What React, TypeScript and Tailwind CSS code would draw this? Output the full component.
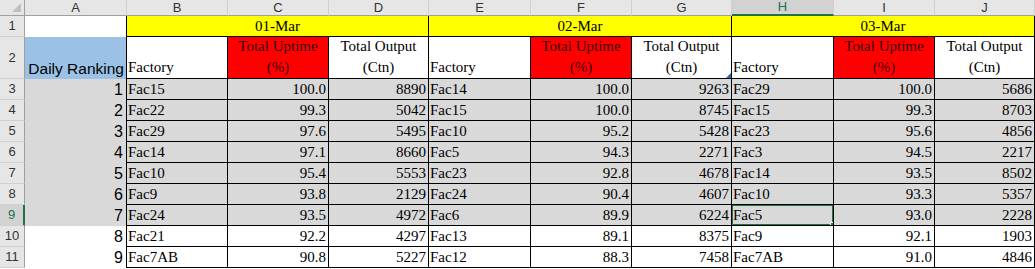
import * as React from "react";

type Row = { rank: number; days: [string, string, string][] };

const rows: Row[] = [
  { rank: 1, days: [["Fac15", "100.0", "8890"], ["Fac14", "100.0", "9263"], ["Fac29", "100.0", "5686"]] },
  { rank: 2, days: [["Fac22", "99.3", "5042"], ["Fac15", "100.0", "8745"], ["Fac15", "99.3", "8703"]] },
  { rank: 3, days: [["Fac29", "97.6", "5495"], ["Fac10", "95.2", "5428"], ["Fac23", "95.6", "4856"]] },
  { rank: 4, days: [["Fac14", "97.1", "8660"], ["Fac5", "94.3", "2271"], ["Fac3", "94.5", "2217"]] },
  { rank: 5, days: [["Fac10", "95.4", "5553"], ["Fac23", "92.8", "4678"], ["Fac14", "93.5", "8502"]] },
  { rank: 6, days: [["Fac9", "93.8", "2129"], ["Fac24", "90.4", "4607"], ["Fac10", "93.3", "5357"]] },
  { rank: 7, days: [["Fac24", "93.5", "4972"], ["Fac6", "89.9", "6224"], ["Fac5", "93.0", "2228"]] },
  { rank: 8, days: [["Fac21", "92.2", "4297"], ["Fac13", "89.1", "8375"], ["Fac9", "92.1", "1903"]] },
  { rank: 9, days: [["Fac7AB", "90.8", "5227"], ["Fac12", "88.3", "7458"], ["Fac7AB", "91.0", "4846"]] },
];

const letters = ["A", "B", "C", "D", "E", "F", "G", "H", "I", "J"];
const dates = ["01-Mar", "02-Mar", "03-Mar"];

const serifFont = "font-['Liberation_Serif','Times_New_Roman',serif] text-[15px]";
const serif = `${serifFont} text-black`;
const sans = "font-['Liberation_Sans',Arial,sans-serif]";
const cell = "border-r border-b border-black flex items-end overflow-hidden whitespace-nowrap leading-[19px]";

function RowHead({ n, active }: { n: number; active?: boolean }) {
  return (
    <div
      className={`${sans} flex items-center justify-center text-[13px] border-b border-[#d0d0d0] ${
        active ? "bg-[#d2d2d2] text-[#217346] border-r-2 border-r-[#217346]" : "bg-[#e6e6e6] text-[#333] border-r border-r-[#9f9f9f]"
      }`}
    >
      {n}
    </div>
  );
}

export default function App() {
  return (
    <div className="w-[1035px] h-[269px] bg-white overflow-hidden">
      <div className="grid grid-cols-[25px_102px_101px_101px_100px_102px_101px_100px_102px_101px_100px] grid-rows-[16px_21px_42px_repeat(9,21px)]">
        {/* column headers */}
        <div className="bg-[#e6e6e6] border-r border-b border-[#9f9f9f] relative">
          <div className="absolute right-[3px] bottom-[3px] w-0 h-0 border-l-[9px] border-l-transparent border-b-[9px] border-b-[#c0c0c0]" />
        </div>
        {letters.map((l) => (
          <div
            key={l}
            className={`${sans} flex items-center justify-center text-[13px] border-r border-[#d0d0d0] ${
              l === "H" ? "bg-[#d2d2d2] text-[#217346] border-b-2 border-b-[#217346]" : "bg-[#e6e6e6] text-[#333] border-b border-b-[#9f9f9f]"
            }`}
          >
            {l}
          </div>
        ))}

        {/* row 1 */}
        <RowHead n={1} />
        <div className="border-r border-black bg-white" />
        {dates.map((d) => (
          <div key={d} className={`${serif} col-span-3 bg-[#ffff00] border-r border-b border-black flex items-center justify-center leading-[19px]`}>
            {d}
          </div>
        ))}

        {/* row 2 */}
        <RowHead n={2} />
        <div className={`${sans} bg-[#9bc2e6] border-r border-black flex items-end justify-end pr-[2px] text-[15.5px] leading-[20px] text-black`}>
          Daily Ranking
        </div>
        {dates.map((d, i) => (
          <React.Fragment key={d}>
            <div className={`${serif} ${cell} bg-white pl-[1px] leading-[21px]`}>Factory</div>
            <div className={`${serifFont} text-[#3a0000] border-r border-b border-black bg-[#ff0000] flex items-end justify-center text-center leading-[21px]`}>
              Total Uptime
              <br />
              (%)
            </div>
            <div className={`${serif} border-r border-b border-black bg-white flex items-end justify-center text-center leading-[21px] relative`}>
              Total Output
              <br />
              (Ctn)
              {i === 1 && (
                <div className="absolute right-0 bottom-0 w-0 h-0 border-l-[5px] border-l-transparent border-b-[5px] border-b-[#3b5fa8]" />
              )}
            </div>
          </React.Fragment>
        ))}

        {/* data rows */}
        {rows.map((r, ri) => {
          const gray = ri < 7;
          const bg = gray ? "bg-[#d9d9d9]" : "bg-white";
          return (
            <React.Fragment key={r.rank}>
              <RowHead n={r.rank + 2} active={r.rank === 7} />
              <div className={`${sans} ${bg} border-r border-black flex items-end justify-end pr-[3px] text-[16px] leading-[20px] text-black`}>
                {r.rank}
              </div>
              {r.days.map(([f, u, o], di) => (
                <React.Fragment key={di}>
                  <div className={`${serif} ${cell} ${bg} pl-[1px] relative`}>
                    {f}
                    {di === 2 && r.rank === 7 && (
                      <div className="absolute -left-[1px] -top-[1px] -right-[1px] -bottom-[1px] border-2 border-[#217346]">
                        <div className="absolute -right-[4px] -bottom-[4px] w-[6px] h-[6px] bg-[#217346] border border-white" />
                      </div>
                    )}
                  </div>
                  <div className={`${serif} ${cell} ${bg} justify-end pr-[2px]`}>{u}</div>
                  <div className={`${serif} ${cell} ${bg} justify-end pr-[2px]`}>{o}</div>
                </React.Fragment>
              ))}
            </React.Fragment>
          );
        })}
      </div>
    </div>
  );
}
